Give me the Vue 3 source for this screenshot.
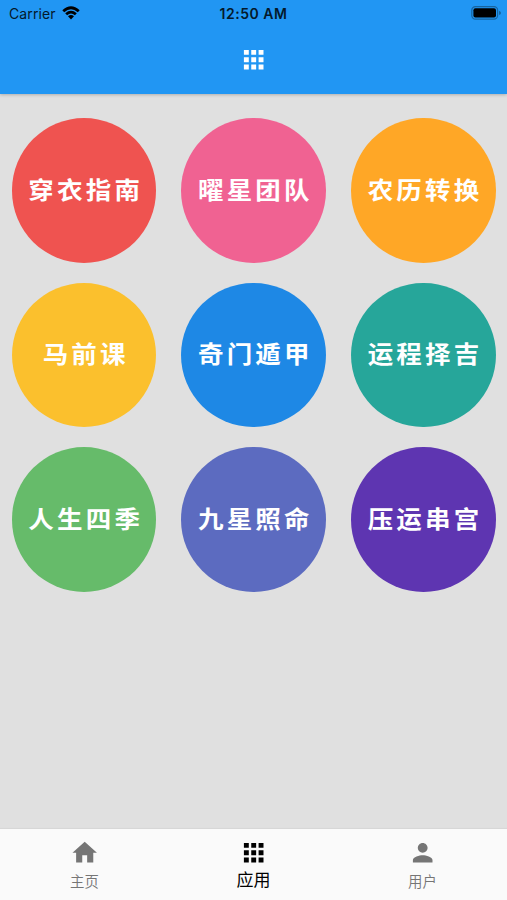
<template>
  <div class="page">
    <!-- 顶部栏 -->
    <header class="app-bar">
      <div class="status-bar">
        <div class="status-left">
          <span class="carrier">Carrier</span>
          <svg class="wifi" viewBox="0 0 18 14">
            <path d="M0.3 4.2Q9-3.6 17.7 4.2L15.8 6.2Q9 0.3 2.2 6.2Z" />
            <path d="M3.2 7.2Q9 2.3 14.8 7.2L12.9 9.2Q9 6 5.1 9.2Z" />
            <path d="M6 10.3Q9 7.8 12 10.3L9 13.5Z" />
          </svg>
        </div>
        <span class="time">12:50 AM</span>
        <div class="status-right">
          <svg class="battery" viewBox="0 0 30 14">
            <rect x="0.8" y="0.6" width="25.8" height="12.6" rx="3.6" class="battery-shell" />
            <rect x="2.4" y="2.2" width="22.6" height="9.4" rx="2" />
            <path d="M28 4.7Q30 5.4 30 6.9T28 9.1Z" class="battery-tip" />
          </svg>
        </div>
      </div>
      <div class="title-bar">
        <svg class="icon" viewBox="0 0 24 24"><path :d="icons.apps" /></svg>
      </div>
    </header>

    <!-- 应用列表 -->
    <main class="app-grid">
      <div v-for="item in apps" :key="item.name" class="app-item" :class="item.color">
        <span class="app-name">{{ item.name }}</span>
      </div>
    </main>

    <!-- 底部导航 -->
    <nav class="tab-bar">
      <div
        v-for="tab in tabs"
        :key="tab.key"
        class="tab"
        :class="{ active: tab.key === current }"
        @click="current = tab.key"
      >
        <svg class="icon" viewBox="0 0 24 24"><path :d="icons[tab.key]" /></svg>
        <span class="tab-label">{{ tab.label }}</span>
      </div>
    </nav>
  </div>
</template>

<script setup>
import { ref } from 'vue'

const current = ref('apps')

const icons = {
  home: 'M10 20v-6h4v6h5v-8h3L12 3 2 12h3v8z',
  apps: 'M4 8h4V4H4v4zm6 12h4v-4h-4v4zm-6 0h4v-4H4v4zm0-6h4v-4H4v4zm6 0h4v-4h-4v4zm6-10v4h4V4h-4zm-6 4h4V4h-4v4zm6 6h4v-4h-4v4zm0 6h4v-4h-4v4z',
  user: 'M12 12c2.21 0 4-1.79 4-4s-1.79-4-4-4-4 1.79-4 4 1.79 4 4 4zm0 2c-2.67 0-8 1.34-8 4v2h16v-2c0-2.66-5.33-4-8-4z',
}

const apps = [
  { name: '穿衣指南', color: 'red' },
  { name: '曜星团队', color: 'pink' },
  { name: '农历转换', color: 'orange' },
  { name: '马前课', color: 'yellow' },
  { name: '奇门遁甲', color: 'blue' },
  { name: '运程择吉', color: 'teal' },
  { name: '人生四季', color: 'green' },
  { name: '九星照命', color: 'indigo' },
  { name: '压运串宫', color: 'purple' },
]

const tabs = [
  { key: 'home', label: '主页' },
  { key: 'apps', label: '应用' },
  { key: 'user', label: '用户' },
]
</script>

<style>
body {
  margin: 0;
}
</style>

<style scoped>
.page {
  display: flex;
  flex-direction: column;
  height: 100vh;
  overflow: hidden;
  background-color: #e0e0e0;
  font-family: Inter, 'Noto Sans CJK SC', sans-serif;
}

/* 顶部栏 */
.app-bar {
  flex: none;
  height: 94px;
  background-color: #2196f3;
  box-shadow: 0 1px 3px rgba(0, 0, 0, 0.22);
}

.status-bar {
  display: grid;
  grid-template-columns: 1fr auto 1fr;
  align-items: center;
  height: 26px;
  padding: 1px 6px 0 9px;
  box-sizing: border-box;
  color: #04192b;
}

.status-left {
  display: flex;
  align-items: center;
  gap: 6px;
}

.carrier {
  font-size: 14px;
  line-height: 18px;
  letter-spacing: 0.1px;
}

.wifi {
  width: 18px;
  height: 14px;
  margin-top: -2px;
  fill: #000;
}

.time {
  margin-left: -3px;
  font-size: 14px;
  font-weight: 600;
  line-height: 18px;
  letter-spacing: 0.5px;
}

.status-right {
  display: flex;
  justify-content: flex-end;
}

.battery {
  width: 30px;
  height: 14px;
  margin-top: -1px;
}

.battery-shell {
  fill: none;
  stroke: #17649f;
  stroke-width: 1.2;
}

.battery-tip {
  fill: #17649f;
}

.title-bar {
  display: flex;
  align-items: center;
  justify-content: center;
  height: 67px;
  color: #fff;
}

.icon {
  display: block;
  width: 29.4px;
  height: 29.4px;
  fill: currentColor;
}

/* 应用列表 */
.app-grid {
  flex: 1;
  display: grid;
  grid-template-columns: repeat(3, 144.6px);
  grid-auto-rows: 144.6px;
  align-content: start;
  gap: 19.9px 25.1px;
  padding: 24.2px 0 0 11.8px;
}

.app-item {
  display: flex;
  align-items: center;
  justify-content: center;
  border-radius: 50%;
}

.app-name {
  margin: 0 -3.2px 3px 0;
  color: #fff;
  font-family: 'Noto Sans CJK SC', sans-serif;
  font-size: 25.5px;
  font-weight: 700;
  line-height: 30px;
  letter-spacing: 3.2px;
  white-space: nowrap;
  transform: scaleY(0.93);
}

.red {
  background-color: #ef5350;
}

.pink {
  background-color: #f06292;
}

.orange {
  background-color: #ffa726;
}

.yellow {
  background-color: #fbc02d;
}

.blue {
  background-color: #1e88e5;
}

.teal {
  background-color: #26a69a;
}

.green {
  background-color: #66bb6a;
}

.indigo {
  background-color: #5c6bc0;
}

.purple {
  background-color: #5e35b1;
}

/* 底部导航 */
.tab-bar {
  flex: none;
  display: flex;
  height: 71px;
  background-color: #fafafa;
  box-shadow: 0 -1px 1px rgba(0, 0, 0, 0.04);
}

.tab {
  flex: 1;
  display: flex;
  flex-direction: column;
  align-items: center;
  padding-top: 8.5px;
  color: #757575;
  cursor: pointer;
}

.tab-label {
  margin-top: 4px;
  font-family: 'Noto Sans CJK SC', sans-serif;
  font-size: 14.4px;
  font-weight: 350;
  line-height: 20px;
}

.tab.active {
  color: #000;
}

.tab.active .tab-label {
  margin-top: 2px;
  font-size: 17px;
  font-weight: 400;
}
</style>
